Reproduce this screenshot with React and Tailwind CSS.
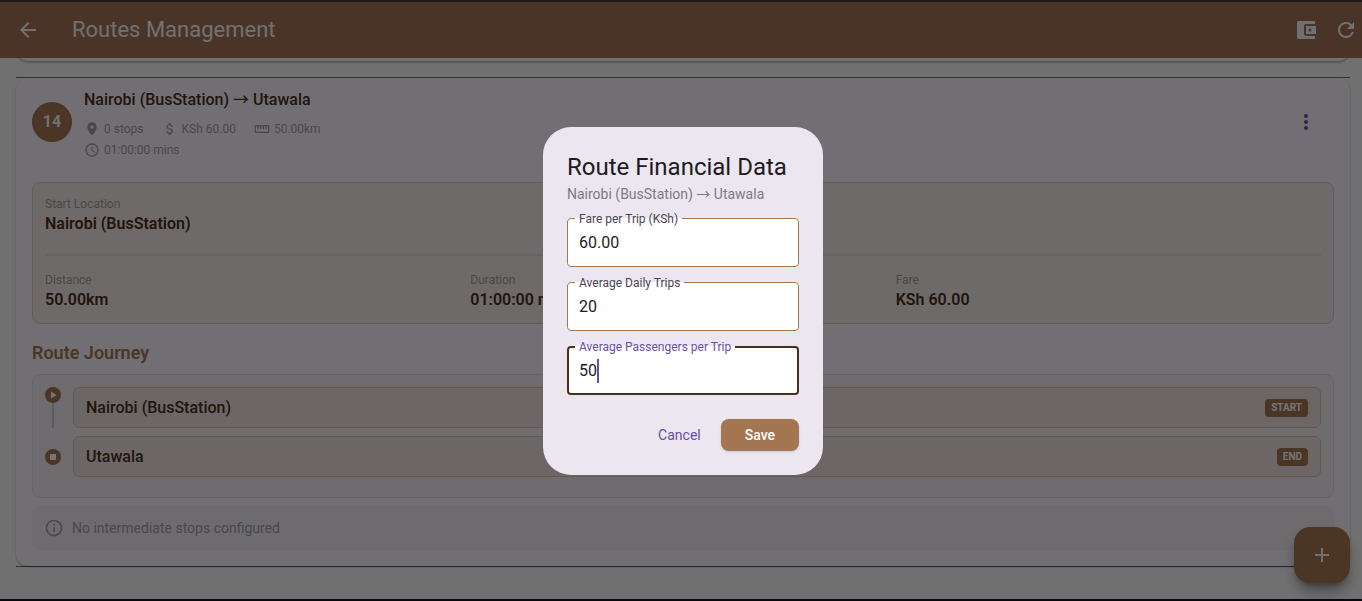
import { useState } from "react";
import {
  MdArrowBack,
  MdRefresh,
  MdMoreVert,
  MdLocationOn,
  MdAttachMoney,
  MdStraighten,
  MdAccessTime,
  MdPlayArrow,
  MdStop,
  MdInfoOutline,
  MdAdd,
} from "react-icons/md";

function WalletIcon() {
  return (
    <svg viewBox="0 0 24 24" fill="currentColor" className="size-6" aria-hidden="true">
      <path d="M21 18v3H4a1 1 0 0 1-1-1V4a1 1 0 0 1 1-1h17v3H12a2 2 0 0 0-2 2v8a2 2 0 0 0 2 2h9zm-9-2h10V8H12v8zm4-2.5c-.83 0-1.5-.67-1.5-1.5s.67-1.5 1.5-1.5 1.5.67 1.5 1.5-.67 1.5-1.5 1.5z" />
    </svg>
  );
}

function Meta({ icon: Icon, children }) {
  return (
    <span className="flex items-center gap-1">
      <Icon className="size-4" />
      {children}
    </span>
  );
}

function Detail({ label, value }) {
  return (
    <div>
      <dt className="pt-0.5 text-xs leading-[15px] text-[#9e9e9e]">{label}</dt>
      <dd className="text-base leading-[23px] font-semibold text-[#4a2f1b]">{value}</dd>
    </div>
  );
}

function Stop({ name, badge, icon: Icon, first }) {
  return (
    <li className="flex gap-3">
      <div className={first ? "flex w-4 flex-col items-center" : "flex w-4 flex-col items-center justify-center"}>
        <span className="flex size-4 shrink-0 items-center justify-center rounded-full bg-[#a47551] text-white">
          <Icon className="size-3" />
        </span>
        {first && <span className="w-0.5 flex-1 bg-[#c8c4ca]" />}
      </div>
      <div className="flex flex-1 items-center justify-between rounded-md border border-[#d9c3b0] bg-[#ebe1df] px-3 py-2">
        <span className="text-base leading-[23px] font-medium text-[#4a2f1b]">{name}</span>
        <span className="rounded bg-[#a47551] px-1.5 text-[10px] leading-[18px] font-bold text-white">{badge}</span>
      </div>
    </li>
  );
}

function Field({ id, label, value, onChange, focused }) {
  return (
    <fieldset
      className={
        focused
          ? "relative h-14 rounded border-2 border-[#4a2f1b] bg-white px-1.5"
          : "relative h-14 rounded border border-[#a47551] bg-white px-[7px]"
      }
    >
      <legend className="h-4 px-1 text-xs leading-4">
        <label htmlFor={id} className={focused ? "text-[#6750a4]" : "text-[#49454f]"}>
          {label}
        </label>
      </legend>
      <input
        id={id}
        type="text"
        inputMode="decimal"
        value={value}
        onChange={onChange}
        className={
          focused
            ? "block h-8 w-full bg-transparent px-1 text-base text-[#1d1b20] caret-transparent outline-none"
            : "block h-8 w-full bg-transparent px-1 text-base text-[#1d1b20] outline-none"
        }
      />
      {focused && (
        <div aria-hidden="true" className="pointer-events-none absolute bottom-1 left-2.5 flex h-6 text-base">
          <span className="invisible">{value}</span>
          <span className="w-0.5 bg-[#6750a4]" />
        </div>
      )}
    </fieldset>
  );
}

export default function App() {
  const [fare, setFare] = useState("60.00");
  const [trips, setTrips] = useState("20");
  const [passengers, setPassengers] = useState("50");

  return (
    <div className="flex min-h-screen flex-col border-t-2 border-[#3a3a3e] bg-[#f5f5f5] font-['Roboto','Noto_Sans_CJK_SC','Liberation_Sans',sans-serif]">
      <header className="relative z-10 flex h-14 items-center bg-[#a07256] pr-1 pl-4 text-[#f5f5f5]">
        <button type="button" aria-label="Back">
          <MdArrowBack className="size-6" />
        </button>
        <h1 className="ml-8 flex-1 text-[22px] leading-7">Routes Management</h1>
        <div className="flex gap-4">
          <button type="button" aria-label="Financial data">
            <WalletIcon />
          </button>
          <button type="button" aria-label="Refresh">
            <MdRefresh className="size-6" />
          </button>
        </div>
      </header>

      <main className="flex-1 pr-3 pl-4">
        <div className="-mt-5 h-[23px] rounded-b-xl bg-[#f7f2fa] shadow-[0_1px_3px_rgba(0,0,0,0.4)]" />

        <article className="mt-4 border-y border-[#6f6a78]">
          <div className="rounded-xl bg-[#f7f2fa] px-4 pb-4 shadow-[0_1px_2px_rgba(0,0,0,0.3)]">
            <div className="flex items-center py-2">
              <span className="flex size-10 items-center justify-center rounded-full bg-[#a47551] text-base font-bold text-[#f5f5f5]">
                14
              </span>
              <div className="ml-3 flex-1 pt-0.5">
                <h2 className="text-base leading-6 font-medium text-[#4a2f1b]">Nairobi (BusStation) → Utawala</h2>
                <div className="mt-[9px] flex flex-col gap-[5px] text-xs leading-4 text-[#9e9e9e]">
                  <div className="flex gap-[18px]">
                    <Meta icon={MdLocationOn}>0 stops</Meta>
                    <Meta icon={MdAttachMoney}>KSh 60.00</Meta>
                    <Meta icon={MdStraighten}>50.00km</Meta>
                  </div>
                  <Meta icon={MdAccessTime}>01:00:00 mins</Meta>
                </div>
              </div>
              <button type="button" aria-label="More options" className="mr-4 text-[#6750a4]">
                <MdMoreVert className="size-6" />
              </button>
            </div>

            <dl className="mt-4 rounded-lg border border-[#dcc6bc] bg-[#f0e7e6] p-3">
              <Detail label="Start Location" value="Nairobi (BusStation)" />
              <div className="mt-[19px] mb-[15px] h-0.5 bg-[#e0d8d9]" />
              <div className="grid grid-cols-3">
                <Detail label="Distance" value="50.00km" />
                <Detail label="Duration" value="01:00:00 mins" />
                <Detail label="Fare" value="KSh 60.00" />
              </div>
            </dl>

            <h3 className="mt-4 text-lg leading-[26px] font-semibold text-[#a47551]">Route Journey</h3>
            <ul className="mt-2 flex flex-col gap-2 rounded-lg border border-[#dfdadf] bg-[#f0ebf2] px-3 pt-3 pb-5">
              <Stop name="Nairobi (BusStation)" badge="START" icon={MdPlayArrow} first />
              <Stop name="Utawala" badge="END" icon={MdStop} />
            </ul>

            <p className="mt-2 flex items-center gap-2 rounded-lg bg-[#eee9f0] p-3 text-sm leading-5 text-[#9e9e9e]">
              <MdInfoOutline className="size-5" />
              No intermediate stops configured
            </p>
          </div>
        </article>
      </main>

      <button
        type="button"
        aria-label="Add route"
        className="fixed right-3 bottom-[18px] flex size-14 items-center justify-center rounded-2xl bg-[#a47551] text-[#f5f5f5] shadow-lg shadow-black/40"
      >
        <MdAdd className="size-6" />
      </button>

      <div className="h-0.5 bg-[#12141c]" />

      <div className="fixed inset-0 z-20 flex items-center justify-center bg-black/54 pl-1">
        <form
          role="dialog"
          aria-labelledby="dialog-title"
          className="w-[280px] rounded-[28px] bg-[#ece6f0] p-6"
          onSubmit={(e) => e.preventDefault()}
        >
          <h2 id="dialog-title" className="text-2xl leading-8 text-[#1d1b20]">
            Route Financial Data
          </h2>
          <p className="text-sm leading-[22px] text-[#7d7a80]">Nairobi (BusStation) → Utawala</p>
          <div className="mt-1.5 flex flex-col gap-2">
            <Field id="fare" label="Fare per Trip (KSh)" value={fare} onChange={(e) => setFare(e.target.value)} />
            <Field id="trips" label="Average Daily Trips" value={trips} onChange={(e) => setTrips(e.target.value)} />
            <Field
              id="passengers"
              label="Average Passengers per Trip"
              value={passengers}
              onChange={(e) => setPassengers(e.target.value)}
              focused
            />
          </div>
          <div className="mt-6 flex justify-end gap-2">
            <button type="button" className="h-8 px-3 text-sm text-[#6750a4]">
              Cancel
            </button>
            <button type="submit" className="h-8 rounded-lg bg-[#a47551] px-6 text-sm font-medium text-white shadow-sm">
              Save
            </button>
          </div>
        </form>
      </div>
    </div>
  );
}
